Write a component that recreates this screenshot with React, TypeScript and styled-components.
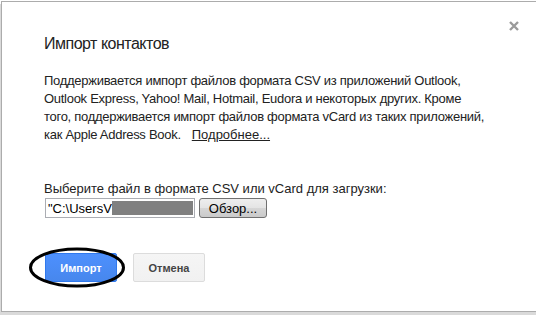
import React from "react";
import styled, { createGlobalStyle } from "styled-components";

const Global = createGlobalStyle`
  html, body { margin: 0; padding: 0; background: #ffffff; }
  body { font-family: Arial, "Liberation Sans", sans-serif; color: #222; overflow: hidden; }
`;

const Page = styled.div`
  width: 536px;
  height: 316px;
  overflow: hidden;
  padding: 1px 0 0 1px;
  box-sizing: border-box;
`;

const Dialog = styled.div`
  position: relative;
  width: 580px;
  box-sizing: border-box;
  border: 1px solid #acacac;
  background: #fff;
  box-shadow: -1px 3px 0 0 #dadada;
  padding: 30px 42px 29px 42px;
  display: flex;
  flex-direction: column;
`;

const Close = styled.button`
  position: absolute;
  top: 17px;
  left: 505px;
  width: 14px;
  height: 14px;
  padding: 0;
  border: 0;
  background: none;
  display: flex;
  align-items: center;
  justify-content: center;
  cursor: pointer;
`;

const Title = styled.h2`
  margin: 0;
  font-size: 16px;
  line-height: 24px;
  font-weight: normal;
  letter-spacing: -0.5px;
  color: #222;
`;

const Paragraph = styled.p`
  margin: 16px 0 0 0;
  font-size: 13px;
  line-height: 18px;
  letter-spacing: -0.28px;
  color: #222;
  white-space: nowrap;
`;

const MoreLink = styled.a`
  color: #222;
  text-decoration: underline;
  letter-spacing: 0;
  margin-left: 11px;
`;

const Label = styled.div`
  margin-top: 36px;
  font-size: 13px;
  line-height: 18px;
  color: #222;
`;

const FileRow = styled.div`
  display: flex;
  align-items: center;
  gap: 4px;
  margin-left: 1px;
`;

const FileField = styled.div`
  width: 150px;
  height: 20px;
  box-sizing: border-box;
  border: 1px solid #abadb3;
  display: flex;
  align-items: center;
  padding: 0 1px 0 2px;
  font-size: 13px;
  color: #000;
  white-space: nowrap;
`;

const Redacted = styled.span`
  flex: 1;
  height: 14px;
  background: #808080;
`;

const Browse = styled.button`
  width: 68px;
  height: 20px;
  box-sizing: border-box;
  border: 1px solid #707070;
  border-radius: 3px;
  background: linear-gradient(#eeeeee, #e4e4e4 50%, #d6d6d6 51%, #cacaca);
  font-family: Arial, "Liberation Sans", sans-serif;
  font-size: 13px;
  color: #000;
  padding: 0;
`;

const Actions = styled.div`
  position: relative;
  margin-top: 35px;
  display: flex;
  gap: 16px;
  margin-left: 1px;
`;

const ActionButton = styled.button<{ $primary?: boolean }>`
  width: 72px;
  height: 29px;
  box-sizing: border-box;
  border-radius: 2px;
  font-family: Arial, "Liberation Sans", sans-serif;
  font-size: 11px;
  font-weight: bold;
  padding: 0;
  border: 1px solid ${(p) => (p.$primary ? "#3079ed" : "#dcdcdc")};
  background: ${(p) =>
    p.$primary ? "linear-gradient(#4d90fe, #4787ed)" : "linear-gradient(#f5f5f5, #f1f1f1)"};
  color: ${(p) => (p.$primary ? "#fff" : "#444")};
`;

const Annotation = styled.svg`
  position: absolute;
  left: -16px;
  top: -6px;
  pointer-events: none;
`;

export default function App() {
  return (
    <Page>
      <Global />
      <Dialog>
        <Close aria-label="Закрыть">
          <svg width="10" height="10" viewBox="0 0 10 10">
            <path d="M1 1 L9 9 M9 1 L1 9" stroke="#9a9a9a" strokeWidth="2.4" strokeLinecap="butt" />
          </svg>
        </Close>
        <Title>Импорт контактов</Title>
        <Paragraph>
          Поддерживается импорт файлов формата CSV из приложений Outlook,
          <br />
          Outlook Express, Yahoo! Mail, Hotmail, Eudora и некоторых других. Кроме
          <br />
          того, поддерживается импорт файлов формата vCard из таких приложений,
          <br />
          как Apple Address Book.
          <MoreLink href="#">Подробнее...</MoreLink>
        </Paragraph>
        <Label>Выберите файл в формате CSV или vCard для загрузки:</Label>
        <FileRow>
          <FileField>
            <span>"C:\UsersV</span>
            <Redacted />
          </FileField>
          <Browse>Обзор...</Browse>
        </FileRow>
        <Actions>
          <ActionButton $primary>Импорт</ActionButton>
          <ActionButton>Отмена</ActionButton>
          <Annotation width="100" height="42" viewBox="0 0 100 42">
            <ellipse cx="48" cy="20.5" rx="46.5" ry="18.5" fill="none" stroke="#000" strokeWidth="3" />
          </Annotation>
        </Actions>
      </Dialog>
    </Page>
  );
}
